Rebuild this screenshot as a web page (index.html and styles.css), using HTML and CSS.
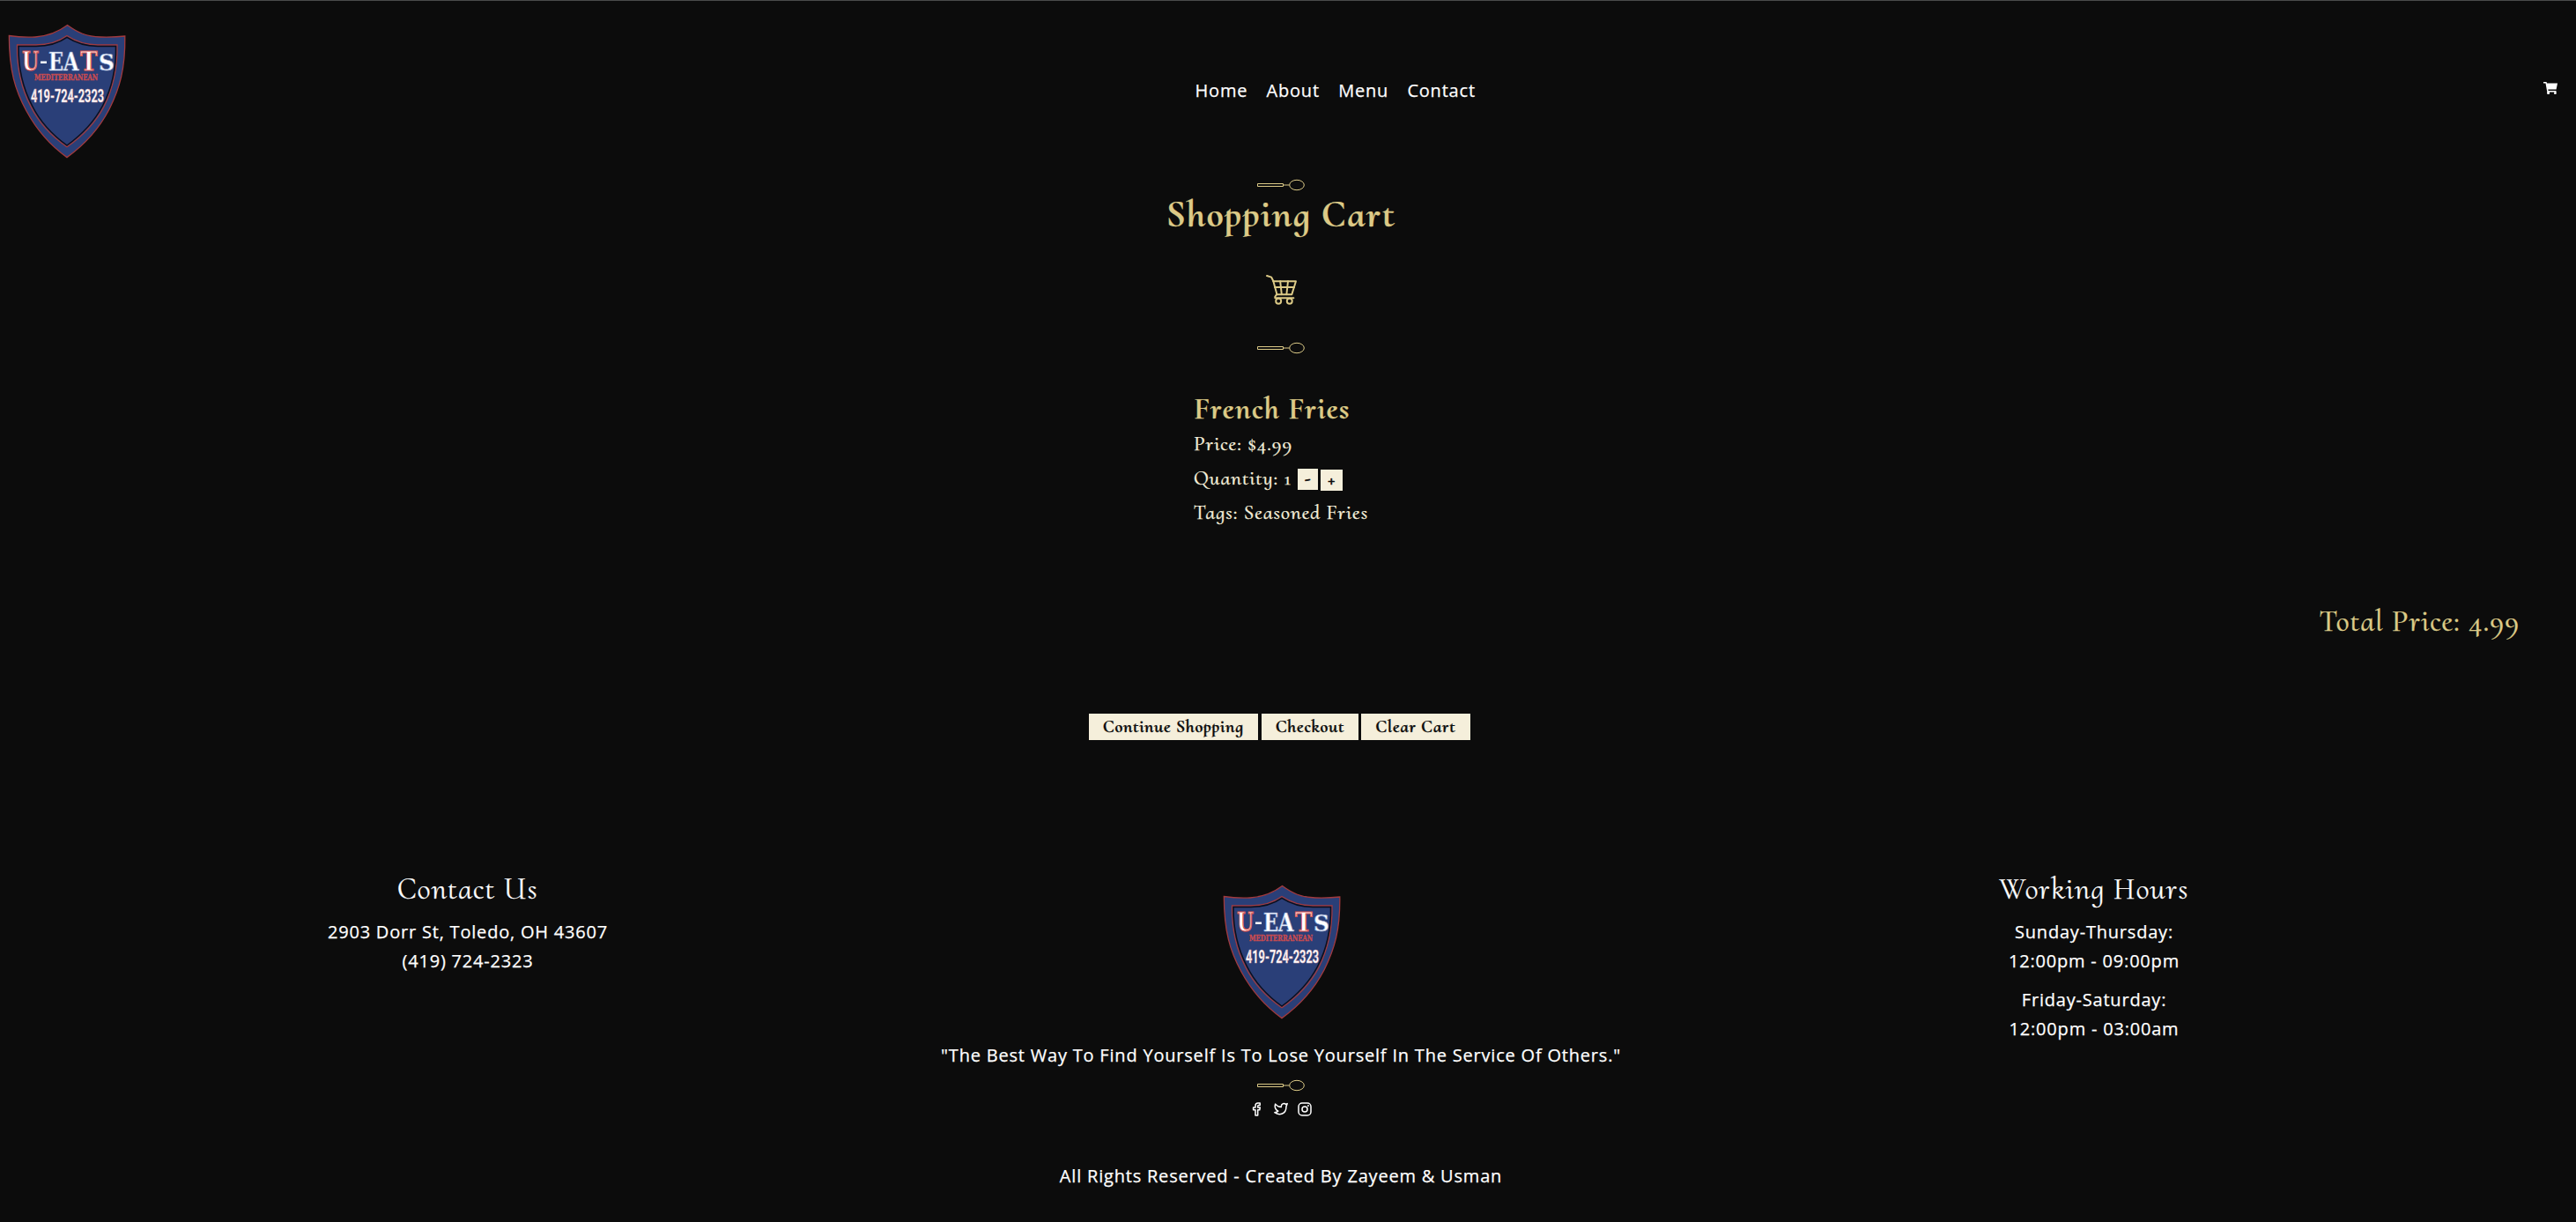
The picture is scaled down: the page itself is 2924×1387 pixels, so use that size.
FILE: index.html
```html
<!DOCTYPE html>
<html lang="en">
<head>
<meta charset="utf-8">
<title>U-Eats - Shopping Cart</title>
<link rel="stylesheet" href="styles.css">
</head>
<body>
<svg class="defs" aria-hidden="true">
  <defs>
    <symbol id="logo" viewBox="9 27 134 153">
      <path fill="#2a3f78" stroke="#a23a3e" stroke-width="1.3" d="M76.5 28.6C88 37 98 41.500 114 42C124 42.300 133 42 141.800 41C142.300 78 136 100 124 124C112 147 95 165 76 178.600C57 165 42 148 30 126C17 102 10.500 80 10.300 40.500C20 42 30 42.500 40 42C56 41 66 36.500 76.500 28.600Z"/>
      <path fill="none" stroke="#a23a3e" stroke-width="1.3" d="M76 40.500C88 48.500 99 50.800 111 51H133C133.500 79 128 101 118 121C108 140 93 155 76 166.800C59 155 44 139 35 121C24 100 19 78 19.500 51H41C53 50.800 65 48.500 76 40.500Z"/>
      <path fill="none" stroke="#0c0e1c" stroke-width="1.500" d="M76 42.300C88 50 99 52.300 111 52.500H131.500C132 79 126.500 101 116.500 120C107 138 92 153.500 76 165C60 153.500 45.500 138 36.500 120C26 100 20.700 78 21 52.500H41C53 52.300 65 50 76 42.300Z"/>
      <g class="logo-slab">
        <text class="logo-red" x="25" y="80" font-size="29" textLength="19" lengthAdjust="spacingAndGlyphs">U</text>
        <path fill="#fff" d="M46 69.500h7v2.500h-7z"/>
        <text class="logo-blue" x="55" y="80" font-size="27" textLength="34.500" lengthAdjust="spacingAndGlyphs">EA</text>
        <text class="logo-red" x="91" y="80" font-size="29.500" textLength="19.500" lengthAdjust="spacingAndGlyphs">T</text>
        <text class="logo-blue" x="112" y="80" font-size="26.500" textLength="18" lengthAdjust="spacingAndGlyphs">S</text>
        <text class="logo-sub" x="39" y="91" font-size="9" textLength="72" lengthAdjust="spacingAndGlyphs">MEDITERRANEAN</text>
      </g>
      <text class="logo-phone" x="35" y="115.700" font-size="19.500" textLength="83" lengthAdjust="spacingAndGlyphs">419-724-2323</text>
    </symbol>
    <symbol id="spoon" viewBox="0 0 56 16">
      <g fill="none" stroke="#dcca87" stroke-width="1">
        <path d="M1.500 6.500h29v3h-29z"/>
        <path d="M30.500 8h7"/>
        <ellipse cx="46" cy="8" rx="8.300" ry="5.700"/>
      </g>
    </symbol>
  </defs>
</svg>

<header class="navbar">
  <svg class="logo"><use href="#logo"/></svg>
  <nav class="links"><a>Home</a><a>About</a><a>Menu</a><a>Contact</a></nav>
  <svg class="mini-cart" viewBox="0 0 16 15"><path fill="#fff" d="M0 0h3.500l.5 1.500H16L14.600 8.500H5.300L5.600 10H14.500V13.500H12.700V11.500H7V13.500H4.200V11L2.500 1.500H0Z"/><circle cx="5.600" cy="12.700" r="1.300" fill="#fff"/><circle cx="13.300" cy="12.700" r="1.300" fill="#fff"/></svg>
</header>

<main class="cart">
  <svg class="spoon"><use href="#spoon"/></svg>
  <h1>Shopping Cart</h1>
  <svg class="cart-icon" viewBox="0 0 34 33">
    <g fill="none" stroke="#dcca87" stroke-width="1.900" stroke-linecap="round" stroke-linejoin="round">
      <path d="M1 1l5 1.600 2 4 4 14.600-2 2.800v1.500h20.500"/>
      <path d="M8 7h25l-4.500 14.500H12"/>
      <path d="M9.700 13.500h21.500M15.700 7l1.600 14.500M24.300 7l-1.600 14.500"/>
      <circle cx="13.800" cy="28.800" r="2.900"/><circle cx="26" cy="28.800" r="2.900"/>
    </g>
  </svg>
  <svg class="spoon spoon-low"><use href="#spoon"/></svg>

  <section class="item">
    <h2>French Fries</h2>
    <p>Price: $4.99</p>
    <div class="quantity"><span class="qty">Quantity: 1</span><button class="minus">-</button><button class="plus">+</button></div>
    <p>Tags: Seasoned Fries</p>
  </section>

  <p class="total">Total Price: 4.99</p>

  <div class="actions"><button class="continue">Continue Shopping</button><button class="checkout">Checkout</button><button class="clear">Clear Cart</button></div>
</main>

<footer>
  <div class="columns">
    <section>
      <h3>Contact Us</h3>
      <p>2903 Dorr St, Toledo, OH 43607</p>
      <p>(419) 724-2323</p>
    </section>
    <section class="brand">
      <svg class="logo"><use href="#logo"/></svg>
      <p class="quote">"The Best Way To Find Yourself Is To Lose Yourself In The Service Of Others."</p>
      <svg class="spoon"><use href="#spoon"/></svg>
      <div class="social">
        <svg viewBox="0 0 16 16"><path d="M10.700 1H8.900C7 1 6 2.200 6 4v2H3.600v2.800H6V15h2.700V8.800h2.100L11.300 6H8.700V4.500c0-.6.300-.9.900-.9h1.600V1z"/></svg>
        <svg viewBox="0 0 16 16"><path d="M15.200 1.600l-1.700.9c-1.600-1.700-5-1-5.200 2.200v.8C5.700 5.500 3.400 4.300 1.600 2.100c-.9 3.200-.1 6.200 3.200 8-1.200 1-2.400 1.500-4 1.600 5.400 4 13.400 1.500 13.100-6.500z"/></svg>
        <svg viewBox="0 0 16 16"><rect x="1" y="1" width="14" height="14" rx="4"/><circle cx="8" cy="8" r="3"/><circle cx="11.900" cy="4.100" r=".3"/></svg>
      </div>
    </section>
    <section>
      <h3>Working Hours</h3>
      <p>Sunday-Thursday:</p>
      <p>12:00pm - 09:00pm</p>
      <p class="second">Friday-Saturday:</p>
      <p>12:00pm - 03:00am</p>
    </section>
  </div>
  <p class="copyright">All Rights Reserved - Created By Zayeem &amp; Usman</p>
</footer>
</body>
</html>
```
FILE: styles.css
```css
* { box-sizing: border-box; margin: 0; padding: 0; }
body {
  height: 1387px;
  padding-right: 16px;
  overflow: hidden;
  border-top: 1px solid #4a4b4b;
  background: #0c0c0c;
  color: #fff;
  font: 400 20px/33px "Open Sans", sans-serif;
  letter-spacing: .8px;
  -webkit-text-stroke: .25px;
}
svg { display: block; flex: none; }
.defs { position: absolute; width: 0; height: 0; }
h1, h2, h3, .item, .total, button { font-family: "Cormorant Upright", "Liberation Serif", serif; }

.logo { width: 134px; height: 153px; }
.logo-slab { font-family: "DejaVu Serif", serif; font-weight: 700; letter-spacing: 0; }
.logo text { -webkit-text-stroke: 0; }
.logo-red { fill: #fff; stroke: #d9534f; stroke-width: 1.2px; }
.logo-blue { fill: #fff; stroke: #8fa3cf; stroke-width: .7px; }
.logo-sub { fill: #c94b50; stroke: #c94b50; stroke-width: .4px; }
.logo-phone { fill: #fff; stroke: #d9a0a8; stroke-width: .4px; font-family: Roboto, sans-serif; font-weight: 700; letter-spacing: 0; }

.navbar { display: flex; align-items: flex-start; height: 201px; padding: 26px 5px 0 9px; }
.links { display: flex; gap: 21.3px; margin: 59px 0 0 1213.5px; }
.links a { white-space: nowrap; }
.mini-cart { width: 16px; height: 15px; margin: 66px 0 0 auto; }

.cart { display: flex; flex-direction: column; align-items: center; }
.spoon { width: 56px; height: 16px; }
h1 { margin-top: 2px; color: #dcca87; font-size: 43px; font-weight: 700; line-height: 46px; letter-spacing: 1.55px; }
.cart-icon { width: 35px; height: 34px; margin-top: 46px; }
.spoon-low { margin-top: 41px; }

.item { width: 198px; margin-top: 42px; color: #f5efdb; font-size: 23px; font-weight: 500; line-height: 39px; white-space: nowrap; letter-spacing: 1.03px; }
h2 { color: #dcca87; font-size: 34px; font-weight: 700; line-height: 40px; letter-spacing: 1.34px; }
.quantity { display: flex; align-items: flex-start; height: 39px; }
.qty { width: 118px; }
button { border: 0; border-radius: 0; background: #f5efdb; color: #0c0c0c; font-size: 20px; font-weight: 700; letter-spacing: .76px; white-space: nowrap; }
.quantity button { height: 24px; padding-bottom: 3px; line-height: 20px; text-align: center; -webkit-text-stroke: .7px; }
.minus { width: 23px; margin-top: 8px; }
.plus { width: 25px; margin: 9px 0 0 3px; }

.total { align-self: flex-end; margin: 84px 48px 0 0; color: #dcca87; font-size: 34px; font-weight: 500; line-height: 40px; letter-spacing: 1.05px; }

.actions { display: flex; margin: 84px 3px 0 0; }
.actions button { height: 30px; line-height: 28px; }
.continue { width: 192px; }
.checkout { width: 110px; margin: 0 3px 0 4px; }
.clear { width: 124px; }

footer { margin-top: 150px; text-align: center; }
.columns { display: grid; grid-template-columns: repeat(3, 923px); justify-content: center; height: 278px; }
h3 { margin-bottom: 10.5px; font-size: 34px; font-weight: 400; line-height: 40px; letter-spacing: 1.3px; }
.second { margin-top: 11px; }
.brand { display: flex; flex-direction: column; align-items: center; padding-top: 14px; }
.brand .logo { margin-left: 2px; }
.quote { margin: 23.5px 0 10px; white-space: nowrap; }
.social { display: flex; gap: 11px; margin-top: 11px; }
.social svg { width: 16px; height: 16px; fill: none; stroke: #fff; stroke-width: 1.5; stroke-linejoin: round; }
.copyright { margin-top: 49.5px; }
```
